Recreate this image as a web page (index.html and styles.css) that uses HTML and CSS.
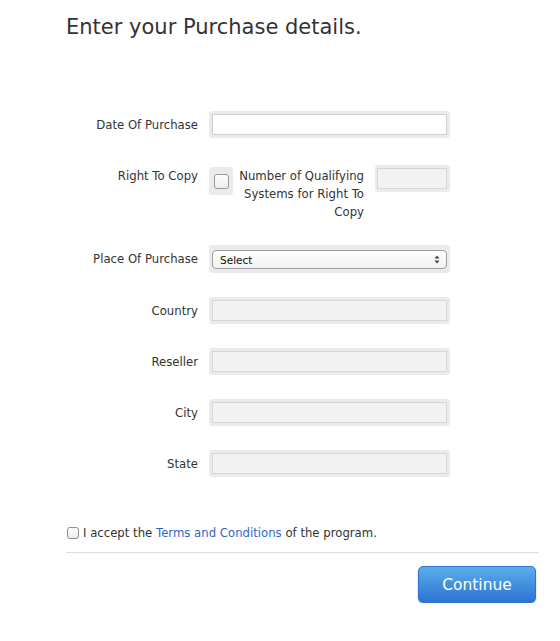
FILE: index.html
```html
<!DOCTYPE html>
<html lang="en">
<head>
<meta charset="utf-8">
<title>Purchase details</title>
<link rel="stylesheet" href="styles.css">
</head>
<body>
<div class="page">
  <h1 class="title">Enter your Purchase details.</h1>
  <form class="form">
    <div class="row">
      <label class="label">Date Of Purchase</label>
      <div class="well"><input class="field field-white" type="text"></div>
    </div>
    <div class="row row-copy">
      <label class="label label-top">Right To Copy</label>
      <div class="copy-group">
        <div class="well well-check"><span class="check"></span></div>
        <div class="copy-text">Number of Qualifying Systems for Right To Copy</div>
        <div class="well well-small"><input class="field field-disabled" type="text" disabled></div>
      </div>
    </div>
    <div class="row">
      <label class="label">Place Of Purchase</label>
      <div class="well well-select">
        <div class="select">
          <span class="select-text">Select</span>
          <svg class="select-arrows" width="6" height="9" viewBox="0 0 6 9"><path d="M0.5 3.5 L3 0.5 L5.5 3.5 Z M0.5 5.5 L3 8.5 L5.5 5.5 Z" fill="#444"/></svg>
        </div>
      </div>
    </div>
    <div class="row">
      <label class="label">Country</label>
      <div class="well"><input class="field field-disabled" type="text" disabled></div>
    </div>
    <div class="row">
      <label class="label">Reseller</label>
      <div class="well"><input class="field field-disabled" type="text" disabled></div>
    </div>
    <div class="row">
      <label class="label">City</label>
      <div class="well"><input class="field field-disabled" type="text" disabled></div>
    </div>
    <div class="row">
      <label class="label">State</label>
      <div class="well"><input class="field field-disabled" type="text" disabled></div>
    </div>
  </form>
  <div class="terms">
    <span class="check check-small"></span>
    <span class="terms-text">I accept the <a class="link" href="#">Terms and Conditions</a> of the program.</span>
  </div>
  <div class="divider"></div>
  <div class="actions">
    <button class="btn" type="button">Continue</button>
  </div>
</div>
</body>
</html>
```
FILE: styles.css
```css
* { box-sizing: border-box; }
html, body { margin: 0; padding: 0; background: #fff; }
body {
  font-family: "DejaVu Sans", "Liberation Sans", sans-serif;
  color: #333;
}
.page {
  width: 560px;
  padding: 0 21px 0 66px;
}
.title {
  margin: 0;
  padding-top: 13px;
  font-size: 21px;
  line-height: 28px;
  font-weight: normal;
  color: #333;
}
.form {
  margin-top: 70px;
  display: flex;
  flex-direction: column;
  gap: 24px;
}
.row {
  display: grid;
  grid-template-columns: 132px 241px;
  column-gap: 11px;
  align-items: center;
}
.label {
  text-align: right;
  font-size: 11.7px;
  line-height: 18px;
  color: #333;
}
.label-top { align-self: start; padding-top: 2px; }
.row-copy { align-items: start; margin-top: 3px; }
.well {
  background: #ebebeb;
  border-radius: 3px;
  padding: 3px;
  height: 27px;
}
.field {
  display: block;
  width: 100%;
  height: 21px;
  margin: 0;
  border: 1px solid #cfcfcf;
  border-radius: 0;
  outline: none;
  -webkit-appearance: none;
  appearance: none;
}
.field-white { background: #fff; }
.field-disabled { background: #f2f2f2; border-color: #d6d6d6; }
.copy-group {
  display: flex;
  align-items: flex-start;
}
.well-check {
  width: 24px;
  height: 28px;
  margin-top: 2px;
  display: flex;
  align-items: center;
  justify-content: center;
  padding: 0;
}
.check {
  display: block;
  width: 15px;
  height: 15px;
  border: 1px solid #9a9a9a;
  border-radius: 3px;
  background: linear-gradient(#ffffff, #ececec);
  box-shadow: inset 0 1px 0 #fff;
}
.copy-text {
  width: 126px;
  margin-left: 5px;
  padding-top: 2px;
  text-align: right;
  font-size: 11.7px;
  line-height: 18px;
  color: #333;
}
.well-small {
  width: 75px;
  margin-left: 11px;
  padding: 3px 3px 3px 2px;
}
.well-select {
  height: 28px;
  padding: 5px 3px 4px;
}
.select {
  height: 19px;
  border: 1px solid #9d9d9d;
  border-radius: 4px;
  background: linear-gradient(#ffffff, #f1f1f1);
  display: flex;
  align-items: center;
  justify-content: space-between;
  padding: 0 6px 0 7px;
  font-family: "DejaVu Sans", sans-serif;
  font-size: 10.5px;
  font-weight: 500;
  color: #111;
}
.select-arrows { display: block; }
.terms {
  margin-top: 49px;
  display: flex;
  align-items: center;
  gap: 4px;
  padding-left: 1px;
  font-size: 11.7px;
  line-height: 14px;
  color: #333;
}
.check-small {
  width: 12px;
  height: 12px;
  border-color: #8e8e8e;
  border-radius: 3px;
}
.link { color: #2f67c9; text-decoration: none; }
.divider {
  margin-top: 12px;
  height: 1px;
  background: #dcdcdc;
}
.actions {
  display: flex;
  justify-content: flex-end;
  padding-top: 13px;
  padding-right: 3px;
}
.btn {
  width: 118px;
  height: 37px;
  border: 1px solid #2f72cf;
  border-radius: 5px;
  background: linear-gradient(#5aaeea, #2c73d3);
  color: #fff;
  font-family: "DejaVu Sans", sans-serif;
  font-size: 15.5px;
  box-shadow: 0 1px 2px rgba(0,0,0,0.25);
  cursor: pointer;
}
```
